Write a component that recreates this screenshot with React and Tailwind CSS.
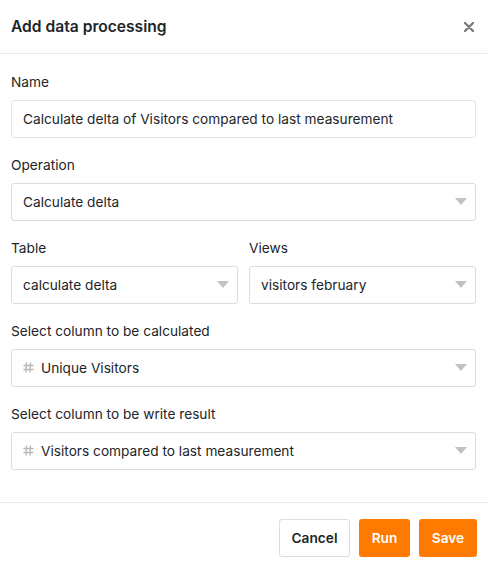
import React from 'react'

function Caret() {
  return (
    <svg width="12" height="8" viewBox="0 0 12 8" className="shrink-0">
      <path d="M0 0h12L6 7z" fill="#c2c2c2" />
    </svg>
  )
}

function Hash() {
  return (
    <svg width="11" height="11" viewBox="0 0 11 11" className="shrink-0">
      <path d="M3.5 0.5L3 10.5M7.5 0.5L7 10.5M0.5 3.5h10M0.5 7.5h10" stroke="#b8b8b8" strokeWidth="1.4" />
    </svg>
  )
}

function Select({ value, hash }) {
  return (
    <div className="h-[38px] flex items-center justify-between pl-[11px] pr-[8px] border border-[#dcdcdc] rounded-[3px] bg-white">
      <div className="flex items-center gap-[7px] text-[13.7px] text-[#212529]">
        {hash && <Hash />}
        <span>{value}</span>
      </div>
      <Caret />
    </div>
  )
}

function Label({ children }) {
  return <div className="text-[13.7px] text-[#212529] mb-[9px] leading-[17px]">{children}</div>
}

export default function App() {
  return (
    <div className="w-[487px] h-[568px] bg-white" style={{ fontFamily: 'Inter, "Liberation Sans", Arial, sans-serif' }}>
      {/* Header */}
      <div className="h-[54px] flex items-center justify-between px-[11px] border-b border-[#e9e9e9]">
        <h1 className="text-[15.6px] font-semibold text-[#212529]">Add data processing</h1>
        <svg width="10" height="10" viewBox="0 0 10 10" className="mr-[2px]">
          <path d="M1 1l8 8M9 1l-8 8" stroke="#7b7b7b" strokeWidth="2.4" strokeLinecap="round" />
        </svg>
      </div>

      {/* Body */}
      <div className="px-[11px] pt-[20px] pb-[32px] border-b border-[#e9e9e9] flex flex-col gap-[19px]">
        <div>
          <Label>Name</Label>
          <div className="h-[38px] flex items-center px-[11px] border border-[#e3e4ec] rounded-[3px] text-[13.7px] text-[#212529]">
            Calculate delta of Visitors compared to last measurement
          </div>
        </div>
        <div>
          <Label>Operation</Label>
          <Select value="Calculate delta" />
        </div>
        <div className="grid grid-cols-2 gap-[11px]">
          <div>
            <Label>Table</Label>
            <Select value="calculate delta" />
          </div>
          <div>
            <Label>Views</Label>
            <Select value="visitors february" />
          </div>
        </div>
        <div>
          <Label>Select column to be calculated</Label>
          <Select value="Unique Visitors" hash />
        </div>
        <div>
          <Label>Select column to be write result</Label>
          <Select value="Visitors compared to last measurement" hash />
        </div>
      </div>

      {/* Footer */}
      <div className="flex justify-end gap-[9px] pl-[11px] pr-[10px] pt-[16px]">
        <button className="h-[38px] w-[71px] rounded-[3px] border border-[#dcdce4] bg-white text-[13.7px] font-semibold text-[#212529]">Cancel</button>
        <button className="h-[38px] w-[51px] rounded-[3px] bg-[#ff7a00] text-[13.7px] font-semibold text-white">Run</button>
        <button className="h-[38px] w-[58px] rounded-[3px] bg-[#ff7a00] text-[13.7px] font-semibold text-white">Save</button>
      </div>
    </div>
  )
}
